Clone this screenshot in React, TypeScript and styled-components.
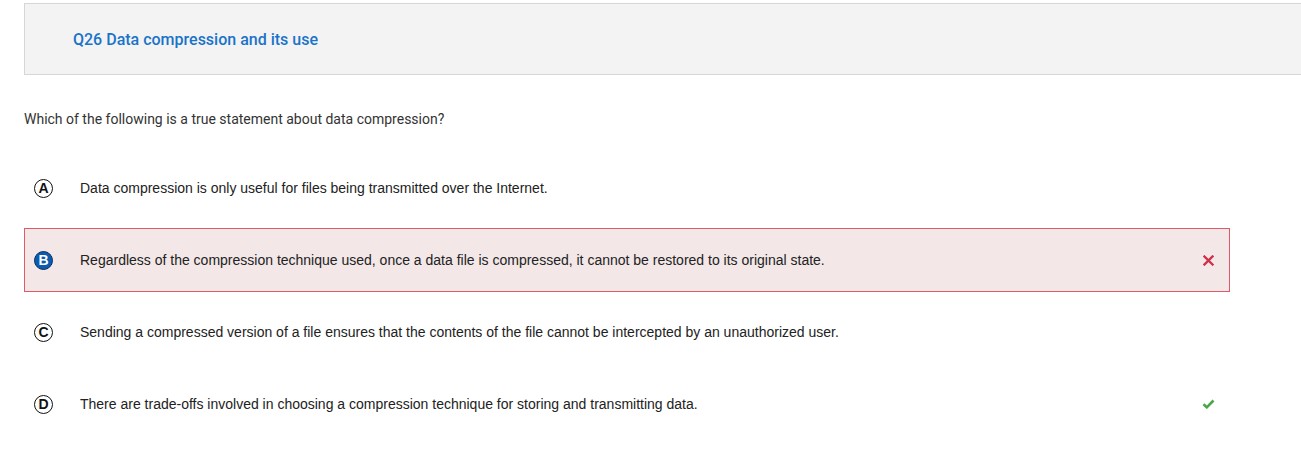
import React from "react";
import styled, { createGlobalStyle, css } from "styled-components";

const Global = createGlobalStyle`
  html, body { margin: 0; padding: 0; background: #fff; overflow: hidden; }
  body { font-family: Roboto, "Liberation Sans", sans-serif; }
`;

const Page = styled.div`
  padding: 3px 0 0 24px;
`;

const Header = styled.div`
  height: 70px;
  display: flex;
  align-items: center;
  padding-left: 48px;
  background: #f3f3f3;
  border: 1px solid #d6d6d6;
  border-right: none;
`;

const Title = styled.h2`
  margin: 0;
  font-family: Roboto, sans-serif;
  font-weight: 500;
  font-size: 16px;
  color: #1a73c9;
`;

const Question = styled.p`
  margin: 35px 0 0 0;
  font-family: Roboto, sans-serif;
  font-size: 14px;
  line-height: 18px;
  color: #333;
`;

const Options = styled.div`
  margin-top: 28px;
  width: 1206px;
  display: flex;
  flex-direction: column;
  gap: 8px;
`;

const Row = styled.div<{ $wrong?: boolean }>`
  box-sizing: border-box;
  height: 64px;
  display: flex;
  align-items: center;
  padding: 0 14px 0 9px;
  border: 1px solid transparent;
  ${(p) =>
    p.$wrong &&
    css`
      background: #f3e7e8;
      border-color: #e05a68;
    `}
`;

const Badge = styled.span<{ $filled?: boolean }>`
  box-sizing: border-box;
  width: 19px;
  height: 19px;
  flex: none;
  border-radius: 50%;
  border: 1.6px solid #111;
  display: flex;
  align-items: center;
  justify-content: center;
  font-family: "Liberation Sans", Arial, sans-serif;
  font-weight: 700;
  font-size: 14px;
  line-height: 1;
  color: #111;
  ${(p) =>
    p.$filled &&
    css`
      background: #0b5cb0;
      border-color: #0a2f5e;
      color: #fff;
    `}
`;

const Text = styled.span`
  flex: 1;
  margin-left: 27px;
  font-family: "Liberation Sans", Arial, sans-serif;
  font-size: 14px;
  color: #222;
`;

const Mark = styled.span`
  width: 13px;
  height: 13px;
  flex: none;
  display: flex;
  align-items: center;
  justify-content: center;
`;

const Cross = () => (
  <svg width="11" height="11" viewBox="0 0 11 11">
    <path d="M1.5 1.5 L9.5 9.5 M9.5 1.5 L1.5 9.5" stroke="#cf3049" strokeWidth="2.3" strokeLinecap="square" fill="none" />
  </svg>
);

const Check = () => (
  <svg width="13" height="10" viewBox="0 0 13 10">
    <path d="M1.5 5.2 L4.8 8.3 L11.5 1.5" stroke="#4aa647" strokeWidth="2.6" fill="none" />
  </svg>
);

const options = [
  { letter: "A", text: "Data compression is only useful for files being transmitted over the Internet." },
  {
    letter: "B",
    text: "Regardless of the compression technique used, once a data file is compressed, it cannot be restored to its original state.",
    wrong: true,
  },
  {
    letter: "C",
    text: "Sending a compressed version of a file ensures that the contents of the file cannot be intercepted by an unauthorized user.",
  },
  {
    letter: "D",
    text: "There are trade-offs involved in choosing a compression technique for storing and transmitting data.",
    correct: true,
  },
];

export default function App() {
  return (
    <Page>
      <Global />
      <Header>
        <Title>Q26 Data compression and its use</Title>
      </Header>
      <Question>Which of the following is a true statement about data compression?</Question>
      <Options>
        {options.map((o) => (
          <Row key={o.letter} $wrong={o.wrong}>
            <Badge $filled={o.wrong}>{o.letter}</Badge>
            <Text>{o.text}</Text>
            <Mark>{o.wrong ? <Cross /> : o.correct ? <Check /> : null}</Mark>
          </Row>
        ))}
      </Options>
    </Page>
  );
}
